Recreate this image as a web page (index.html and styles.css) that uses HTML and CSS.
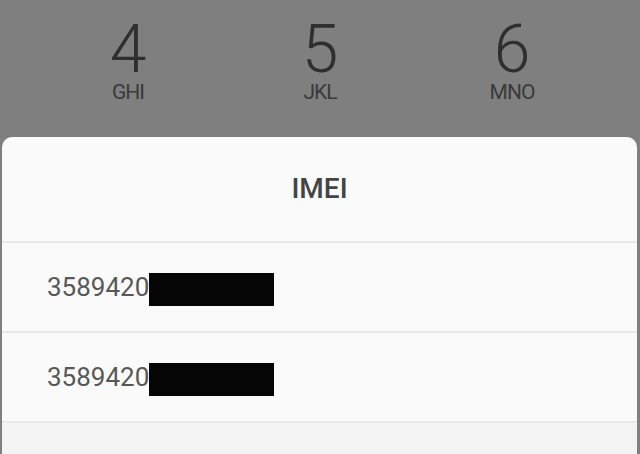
FILE: index.html
```html
<!DOCTYPE html>
<html lang="en">
<head>
<meta charset="utf-8">
<title>IMEI</title>
<link rel="stylesheet" href="styles.css">
</head>
<body>
<div class="screen">
  <div class="keypad">
    <div class="key"><span class="digit">4</span><span class="letters">GHI</span></div>
    <div class="key"><span class="digit">5</span><span class="letters">JKL</span></div>
    <div class="key"><span class="digit">6</span><span class="letters">MNO</span></div>
  </div>
  <div class="dialog">
    <div class="title">IMEI</div>
    <div class="row"><span class="num">3589420</span><span class="redact"></span></div>
    <div class="row"><span class="num">3589420</span><span class="redact"></span></div>
    <div class="footer"></div>
  </div>
</div>
</body>
</html>
```
FILE: styles.css
```css
html, body {
  margin: 0;
  padding: 0;
  background: #7f7f7f;
  width: 640px;
  height: 454px;
  overflow: hidden;
  font-family: Roboto, "Liberation Sans", sans-serif;
}

.screen {
  display: flex;
  flex-direction: column;
  height: 454px;
}

.keypad {
  display: grid;
  grid-template-columns: repeat(3, 192px);
  padding: 19px 32px 0;
  height: 118px;
}

.key {
  display: flex;
  flex-direction: column;
  align-items: center;
  color: #2f2f2f;
}

.digit {
  font-size: 66px;
  line-height: 62px;
  font-weight: 300;
}

.letters {
  font-size: 21px;
  line-height: 22px;
  letter-spacing: -1px;
  color: #3a3a3a;
}

.dialog {
  margin-left: 2px;
  width: 635px;
  flex: 1;
  background: #fafafa;
  border-radius: 10px 10px 0 0;
  display: flex;
  flex-direction: column;
  overflow: hidden;
}

.title {
  height: 104px;
  line-height: 104px;
  text-align: center;
  font-size: 28px;
  font-weight: 500;
  color: #444;
  border-bottom: 2px solid #e9e9e9;
}

.row {
  height: 88px;
  line-height: 88px;
  padding-left: 45px;
  font-size: 26px;
  color: #585858;
  border-bottom: 2px solid #e9e9e9;
  white-space: nowrap;
}

.redact {
  display: inline-block;
  width: 125px;
  height: 33px;
  background: #050505;
  vertical-align: -10px;
}

.footer {
  flex: 1;
  background: #f3f3f3;
}
```
